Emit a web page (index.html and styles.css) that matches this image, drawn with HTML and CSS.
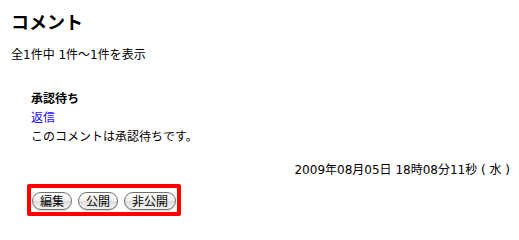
FILE: index.html
```html
<!DOCTYPE html>
<html lang="ja">
<head>
<meta charset="utf-8">
<title>コメント</title>
<link rel="stylesheet" href="styles.css">
</head>
<body>
<div class="page">
  <h1 class="title">コメント</h1>
  <p class="count">全1件中 1件〜1件を表示</p>
  <div class="comment">
    <div class="status">承認待ち</div>
    <a class="reply" href="#">返信</a>
    <div class="body">このコメントは承認待ちです。</div>
  </div>
  <div class="date">2009年08月05日 18時08分11秒 ( 水 )</div>
  <div class="actions">
    <button class="btn" type="button">編集</button>
    <button class="btn" type="button">公開</button>
    <button class="btn" type="button">非公開</button>
  </div>
</div>
</body>
</html>
```

FILE: styles.css
```css
html, body {
  margin: 0;
  padding: 0;
  background: #fff;
}
body {
  font-family: "DejaVu Sans", "Noto Sans CJK JP", sans-serif;
  font-size: 12px;
  color: #000;
}
.page {
  padding: 8px 9px 0 11px;
}
.title {
  font-family: "Noto Sans CJK JP", sans-serif;
  font-size: 18px;
  font-weight: bold;
  margin: 0;
  line-height: 26px;
}
.count {
  margin: 12px 0 0;
  line-height: 18px;
}
.comment {
  margin: 26px 0 0 20px;
  display: flex;
  flex-direction: column;
  line-height: 19px;
}
.status {
  font-weight: bold;
}
.reply {
  color: #1a0dff;
  text-decoration: none;
  align-self: flex-start;
}
.date {
  text-align: right;
  margin-top: 14px;
  line-height: 18px;
}
.actions {
  display: inline-flex;
  gap: 6px;
  margin: 5px 0 0 16px;
  padding: 4px 1px 2px 1px;
  border: 4px solid #f00;
  border-radius: 2px;
}
.btn {
  font-family: "Noto Sans CJK JP", sans-serif;
  font-size: 12px;
  line-height: 14px;
  height: 18px;
  padding: 0 7px;
  border: 1px solid #707070;
  border-radius: 9px;
  background: linear-gradient(#ffffff 0%, #f0f0f0 50%, #dcdcdc 51%, #f4f4f4 100%);
  color: #000;
  box-shadow: 0 1px 1px rgba(0,0,0,0.15);
}
```
